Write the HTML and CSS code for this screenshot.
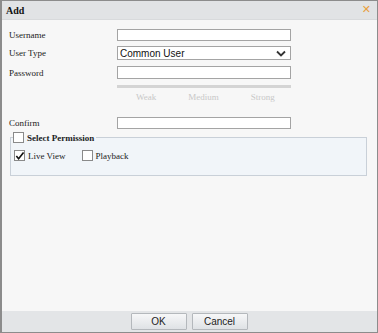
FILE: index.html
```html
<!DOCTYPE html>
<html lang="en">
<head>
    <meta charset="UTF-8">
    <title>Add</title>
    <link rel="stylesheet" href="styles.css">
</head>
<body>
    <div class="dialog">
        <div class="title-bar">
            <span class="title">Add</span>
            <span class="close">&#x2715;</span>
        </div>

        <div class="content">
            <div class="row row-user">
                <label>Username</label>
                <div class="input"></div>
            </div>
            <div class="row row-type">
                <label>User Type</label>
                <div class="select">
                    <span>Common User</span>
                    <svg width="10" height="7" viewBox="0 0 10 7"><path d="M1 1.5 L5 5.5 L9 1.5" fill="none" stroke="#333" stroke-width="1.8"/></svg>
                </div>
            </div>
            <div class="row row-pass">
                <label>Password</label>
                <div class="input"></div>
            </div>
            <div class="strength">
                <div class="strength-bar"></div>
                <div class="strength-labels">
                    <span>Weak</span>
                    <span>Medium</span>
                    <span>Strong</span>
                </div>
            </div>
            <div class="row row-confirm">
                <label>Confirm</label>
                <div class="input"></div>
            </div>

            <fieldset class="perm">
                <legend><span class="box"></span>Select Permission</legend>
                <div class="perm-items">
                    <span class="item"><span class="box"><svg width="10" height="10" viewBox="0 0 10 10"><path d="M1.5 5 L4 8 L9.5 1" fill="none" stroke="#111" stroke-width="1.8"/></svg></span>Live View</span>
                    <span class="item"><span class="box"></span>Playback</span>
                </div>
            </fieldset>
        </div>

        <div class="footer">
            <button>OK</button>
            <button>Cancel</button>
        </div>
    </div>
</body>
</html>
```

FILE: styles.css
```css
html, body {
    margin: 0;
    padding: 0;
}
body {
    font-family: "Liberation Serif", "Times New Roman", serif;
    font-size: 9px;
    color: #222;
    background-color: #ffffff;
}
.dialog {
    width: 378px;
    height: 333px;
    box-sizing: border-box;
    border: 1px solid #8c8c8c;
    border-left: 2px solid #8c8c8c;
    display: flex;
    flex-direction: column;
    background-color: #f7f7f7;
}
.title-bar {
    height: 18px;
    background-color: #e1e3e5;
    display: flex;
    align-items: center;
    justify-content: space-between;
    padding: 0 6px 0 4px;
    border-bottom: 1px solid #d8dadc;
}
.title {
    font-weight: bold;
    font-size: 10px;
    color: #111;
}
.close {
    color: #e8a03c;
    font-family: "DejaVu Sans", sans-serif;
    font-size: 11px;
    margin-top: -2px;
}
.content {
    flex: 1;
    padding: 9px 8px 0 7px;
}
.row {
    display: flex;
    align-items: center;
}
.row label {
    width: 108px;
    font-size: 9px;
}
.input {
    width: 172px;
    height: 10px;
    border: 1px solid #a4a4a4;
    background-color: #fff;
}
.row-type {
    margin-top: 5px;
}
.row-pass {
    margin-top: 6px;
}
.row-pass .input {
    height: 11px;
}
.select {
    height: 12px;
    border: 1px solid #a4a4a4;
    background-color: #fff;
    display: flex;
    align-items: center;
    justify-content: space-between;
    padding: 0 4px 0 2px;
    width: 166px;
    font-family: "Liberation Sans", Arial, sans-serif;
    font-size: 10px;
    color: #111;
}
.strength {
    margin-left: 108px;
    width: 174px;
    margin-top: 6px;
}
.strength-bar {
    height: 3px;
    background-color: #d4d4d4;
}
.strength-labels {
    display: flex;
    gap: 32px;
    margin-top: 4px;
    padding-left: 19px;
    color: #c8c8c8;
    font-size: 9px;
    line-height: 10px;
}
.row-confirm {
    margin-top: 15px;
}
.perm {
    margin: 3px 0 0 1px;
    padding: 2px 2px 14px 3px;
    border: 1px solid #c9d0d8;
    background-color: #f1f5f9;
    width: 357px;
    box-sizing: border-box;
}
.perm legend {
    padding: 0 2px 0 0;
    margin-left: -1px;
    font-weight: bold;
    font-size: 9px;
    display: flex;
    align-items: center;
}
.box {
    display: inline-flex;
    align-items: center;
    justify-content: center;
    width: 9px;
    height: 9px;
    border: 1px solid #8a8a8a;
    background-color: #fff;
    margin-right: 3px;
}
.perm-items {
    display: flex;
    gap: 16px;
    margin-top: 5px;
}
.item {
    display: flex;
    align-items: center;
}
.footer {
    height: 21px;
    background-color: #e3e5e7;
    display: flex;
    justify-content: center;
    align-items: center;
    gap: 5px;
    padding-right: 1px;
}
button {
    width: 56px;
    height: 17px;
    padding: 0;
    border: 1px solid #b4b8bc;
    border-radius: 1px;
    background: linear-gradient(#f6f7f8, #dfe2e5);
    font-family: "Liberation Sans", Arial, sans-serif;
    font-size: 10px;
    color: #222;
}
```
